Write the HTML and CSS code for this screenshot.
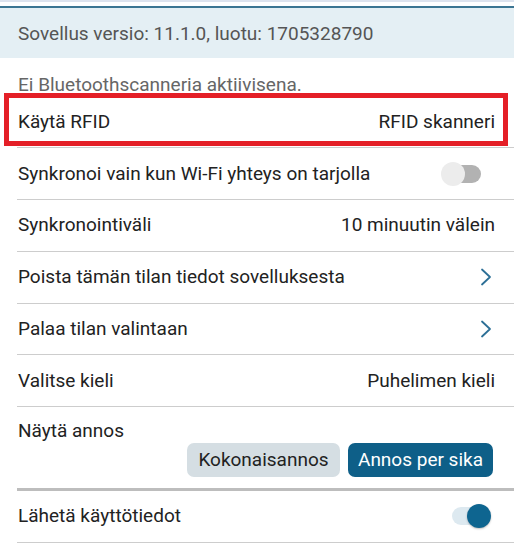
FILE: index.html
```html
<!DOCTYPE html>
<html lang="fi">
<head>
<meta charset="utf-8">
<link rel="stylesheet" href="styles.css">
</head>
<body>
<div class="page">
  <div class="topbar"></div>
  <div class="version">Sovellus versio: 11.1.0, luotu: 1705328790</div>
  <div class="notice">Ei Bluetoothscanneria aktiivisena.</div>
  <div class="list">
    <div class="row row-highlight">
      <span class="label">Käytä RFID</span>
      <span class="value">RFID skanneri</span>
      <span class="highlight"></span>
    </div>
    <div class="row">
      <span class="label">Synkronoi vain kun Wi-Fi yhteys on tarjolla</span>
      <span class="toggle toggle-off"><span class="track"></span><span class="knob"></span></span>
    </div>
    <div class="row">
      <span class="label">Synkronointiväli</span>
      <span class="value">10 minuutin välein</span>
    </div>
    <div class="row">
      <span class="label">Poista tämän tilan tiedot sovelluksesta</span>
      <svg class="chevron" width="12" height="20" viewBox="0 0 12 20"><path d="M2 2.5 L10 10 L2 17.5" fill="none" stroke="#2c6f96" stroke-width="1.8" stroke-linecap="round" stroke-linejoin="round"/></svg>
    </div>
    <div class="row">
      <span class="label">Palaa tilan valintaan</span>
      <svg class="chevron" width="12" height="20" viewBox="0 0 12 20"><path d="M2 2.5 L10 10 L2 17.5" fill="none" stroke="#2c6f96" stroke-width="1.8" stroke-linecap="round" stroke-linejoin="round"/></svg>
    </div>
    <div class="row">
      <span class="label">Valitse kieli</span>
      <span class="value">Puhelimen kieli</span>
    </div>
    <div class="row row-dose">
      <span class="label">Näytä annos</span>
      <div class="buttons">
        <span class="btn btn-grey">Kokonaisannos</span>
        <span class="btn btn-blue">Annos per sika</span>
      </div>
    </div>
    <div class="row">
      <span class="label">Lähetä käyttötiedot</span>
      <span class="toggle toggle-on"><span class="track"></span><span class="knob"></span></span>
    </div>
  </div>
</div>
</body>
</html>
```

FILE: styles.css
```css
* { box-sizing: border-box; }
html, body { margin: 0; padding: 0; background: #ffffff; }
body {
  font-family: Roboto, "Noto Sans", "Liberation Sans", sans-serif;
  font-size: 19px;
  color: #222222;
}
.page { width: 514px; }
.topbar {
  height: 6px;
  border-top: 2px solid #dde3ee;
}
.version {
  height: 52px;
  border-top: 2px solid #3b7592;
  background: #e4eff4;
  color: #555555;
  padding-left: 18px;
  display: flex;
  align-items: center;
}
.notice {
  height: 38.5px;
  padding-top: 17px;
  padding-left: 18px;
  line-height: 20px;
  color: #666666;
}
.list { margin-left: 17px; }
.row {
  height: 51.8px;
  border-bottom: 1px solid #cdcdcd;
  padding: 0 19px 0 1px;
  display: flex;
  align-items: center;
  justify-content: space-between;
  line-height: 20px;
}
.row-highlight { position: relative; }
.highlight {
  position: absolute;
  left: -13px;
  right: 6px;
  top: -4px;
  bottom: 1px;
  border: 5px solid #e41f27;
}
.chevron { margin-right: 3px; display: block; }
.toggle {
  position: relative;
  height: 26px;
}
.toggle .track {
  position: absolute;
  top: 4px;
  width: 36px;
  height: 18px;
  border-radius: 9px;
}
.toggle .knob {
  position: absolute;
  top: 1px;
  width: 24px;
  height: 24px;
  border-radius: 50%;
}
.toggle-off { width: 40px; margin-right: 14px; }
.toggle-off .track { left: 4px; background: #b2b2b2; }
.toggle-off .knob { left: 0; background: #ececec; }
.toggle-on { width: 50px; margin-right: 4px; }
.toggle-on .track { left: 11px; background: #dde9f0; }
.toggle-on .knob { right: 0; background: #0e6590; box-shadow: 0 1px 2px rgba(0,0,0,0.25); }
.row-dose {
  height: 83.7px;
  border-bottom: 3px solid #bdbdbd;
  flex-direction: column;
  align-items: stretch;
  justify-content: flex-start;
  padding-top: 13.5px;
  padding-right: 21px;
}
.buttons {
  display: flex;
  justify-content: flex-end;
  gap: 8px;
  margin-top: 2px;
}
.btn {
  height: 34px;
  border-radius: 7px;
  display: flex;
  align-items: center;
  justify-content: center;
}
.btn-grey { width: 153px; background: #d5dee3; color: #222222; }
.btn-blue { width: 145px; background: #0e5f88; color: #ffffff; }
```
